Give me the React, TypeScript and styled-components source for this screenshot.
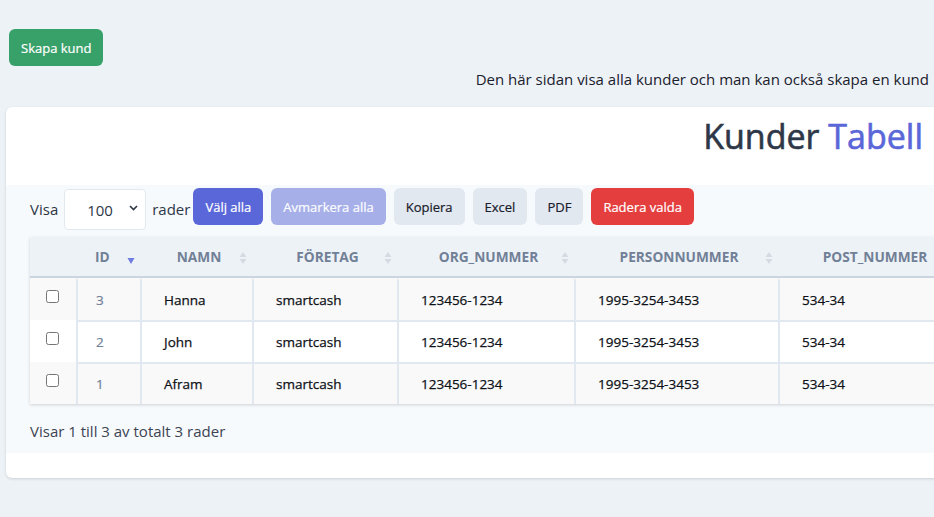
import React from "react";
import styled, { createGlobalStyle } from "styled-components";

const GlobalStyle = createGlobalStyle`
  html, body {
    margin: 0;
    padding: 0;
    background: #edf2f7;
    overflow: hidden;
  }
  body {
    font-family: "Open Sans", "Noto Sans", Arial, sans-serif;
    color: #1a202c;
  }
  * { box-sizing: border-box; }
`;

const Page = styled.div`
  width: 934px;
  padding: 29px 5px 40px 9px;
`;

const CreateButton = styled.button`
  display: block;
  height: 37px;
  padding: 0 12px;
  border: none;
  border-radius: 6px;
  background: #38a169;
  color: #fff;
  font-family: inherit;
  font-size: 13px;
  -webkit-text-stroke: 0.2px #fff;
`;

const Description = styled.p`
  margin: 1px 0 0;
  text-align: right;
  font-size: 15px;
  line-height: 24px;
  color: #1a202c;
`;

const Card = styled.section`
  margin: 16px 0 0 -3px;
  width: 1000px;
  background: #fff;
  border-radius: 6px;
  box-shadow: 0 1px 3px rgba(0, 0, 0, 0.14);
  padding-bottom: 25px;
`;

const Heading = styled.h1`
  width: 917px;
  margin: 0 0 28px;
  padding-top: 8px;
  text-align: right;
  font-size: 34px;
  line-height: 42px;
  font-weight: 400;
  color: #2d3748;
  -webkit-text-stroke: 0.6px #2d3748;
`;

const Accent = styled.span`
  color: #5a67d8;
  -webkit-text-stroke: 0.6px #5a67d8;
`;

const Section = styled.div`
  background: #f7fafc;
  padding: 3px 0 11px 24px;
`;

const Toolbar = styled.div`
  display: flex;
  align-items: flex-start;
  height: 42px;
`;

const Label = styled.span`
  font-size: 15px;
  line-height: 20px;
  color: #2d3748;
  margin-top: 11px;
`;

const SelectWrap = styled.div`
  position: relative;
  margin: 1px 6px 0 6px;
`;

const Select = styled.select`
  appearance: none;
  width: 82px;
  height: 41px;
  padding: 0 0 0 22px;
  border: 1px solid #e2e8f0;
  border-radius: 4px;
  background: #fff;
  font-family: inherit;
  font-size: 15px;
  color: #2d3748;
`;

const Chevron = styled.svg`
  position: absolute;
  right: 8px;
  top: 16px;
  pointer-events: none;
`;

const Buttons = styled.div`
  display: flex;
  gap: 8px;
  margin-left: 3px;
`;

const variants = {
  primary: { bg: "#5a67d8", fg: "#fff" },
  muted: { bg: "#5a67d8", fg: "#fff" },
  light: { bg: "#e2e8f0", fg: "#1a202c" },
  danger: { bg: "#e53e3e", fg: "#fff" },
};

type Variant = keyof typeof variants;

const ToolButton = styled.button<{ $variant: Variant }>`
  height: 37px;
  padding: 0 12px;
  border: none;
  border-radius: 6px;
  font-family: inherit;
  font-size: 13px;
  background: ${(p) => variants[p.$variant].bg};
  color: ${(p) => variants[p.$variant].fg};
  -webkit-text-stroke: 0.2px ${(p) => variants[p.$variant].fg};
  opacity: ${(p) => (p.$variant === "muted" ? 0.5 : 1)};
`;

const TableWrap = styled.div`
  margin-top: 7px;
  box-shadow: 0 1px 3px rgba(0, 0, 0, 0.16);
  width: fit-content;
`;

const Table = styled.table`
  border-collapse: separate;
  border-spacing: 0;
  table-layout: fixed;
`;

const Th = styled.th<{ $left?: boolean }>`
  position: relative;
  height: 41px;
  padding: ${(p) => (p.$left ? "0 0 0 19px" : "0 14px 0 20px")};
  background: #edf2f7;
  border-bottom: 2px solid #cbd5e0;
  text-align: ${(p) => (p.$left ? "left" : "center")};
  font-size: 13.7px;
  font-weight: 700;
  color: #718096;
  text-transform: uppercase;
  white-space: nowrap;
`;

const SortIcon = styled.svg`
  position: absolute;
  right: 5px;
  top: 14px;
`;

const Td = styled.td<{ $odd: boolean; $first: boolean; $pad?: number }>`
  height: 42px;
  padding: 0 0 0 ${(p) => p.$pad ?? 22}px;
  background: ${(p) => (p.$odd ? "#f9f9f9" : "#fff")};
  border-top: 2px solid ${(p) => (p.$first ? "transparent" : "#e2e8f0")};
  border-left: 2px solid #e2e8f0;
  font-size: 13.5px;
  font-weight: 400;
  color: #0d1117;
  -webkit-text-stroke: 0.25px #0d1117;
  white-space: nowrap;
`;

const IdText = styled.span`
  color: #718096;
  -webkit-text-stroke: 0.2px #718096;
`;

const CheckCell = styled.td<{ $odd: boolean }>`
  height: 42px;
  padding: 6px 1px 0 0;
  vertical-align: top;
  text-align: center;
  background: ${(p) => (p.$odd ? "#f9f9f9" : "#fff")};
  border-top: 2px solid transparent;
`;

const Checkbox = styled.input`
  margin: 0;
  width: 13px;
  height: 13px;
`;

const Footer = styled.div`
  padding-top: 16px;
  font-size: 15px;
  line-height: 22px;
  color: #3c4454;
`;

const columns = [
  { key: "id", label: "ID", width: 64, sort: "desc" as const },
  { key: "namn", label: "Namn", width: 112, sort: "none" as const },
  { key: "foretag", label: "Företag", width: 145, sort: "none" as const },
  { key: "org", label: "org_nummer", width: 177, sort: "none" as const },
  { key: "person", label: "Personnummer", width: 204, sort: "none" as const },
  { key: "post", label: "post_nummer", width: 188, sort: "none" as const },
];

const rows = [
  { id: 3, namn: "Hanna", foretag: "smartcash", org: "123456-1234", person: "1995-3254-3453", post: "534-34" },
  { id: 2, namn: "John", foretag: "smartcash", org: "123456-1234", person: "1995-3254-3453", post: "534-34" },
  { id: 1, namn: "Afram", foretag: "smartcash", org: "123456-1234", person: "1995-3254-3453", post: "534-34" },
];

function Sort({ mode }: { mode: "desc" | "none" }) {
  if (mode === "desc") {
    return (
      <SortIcon width="8" height="14" viewBox="0 0 8 14">
        <path d="M0.5 7 L7.5 7 L4 13 Z" fill="#6f7be0" />
      </SortIcon>
    );
  }
  return (
    <SortIcon width="8" height="14" viewBox="0 0 8 14">
      <path d="M0.5 6 L7.5 6 L4 1 Z" fill="#d5dae2" />
      <path d="M0.5 8 L7.5 8 L4 13 Z" fill="#d5dae2" />
    </SortIcon>
  );
}

export default function App() {
  return (
    <>
      <GlobalStyle />
      <Page>
        <CreateButton>Skapa kund</CreateButton>
        <Description>Den här sidan visa alla kunder och man kan också skapa en kund</Description>
        <Card>
          <Heading>
            Kunder <Accent>Tabell</Accent>
          </Heading>
          <Section>
            <Toolbar>
              <Label>Visa</Label>
              <SelectWrap>
                <Select defaultValue="100">
                  <option value="10">10</option>
                  <option value="25">25</option>
                  <option value="50">50</option>
                  <option value="100">100</option>
                </Select>
                <Chevron width="9" height="6" viewBox="0 0 9 6">
                  <path d="M1 1 L4.5 4.5 L8 1" fill="none" stroke="#2d3748" strokeWidth="1.6" />
                </Chevron>
              </SelectWrap>
              <Label>rader</Label>
              <Buttons>
                <ToolButton $variant="primary">Välj alla</ToolButton>
                <ToolButton $variant="muted">Avmarkera alla</ToolButton>
                <ToolButton $variant="light">Kopiera</ToolButton>
                <ToolButton $variant="light">Excel</ToolButton>
                <ToolButton $variant="light">PDF</ToolButton>
                <ToolButton $variant="danger">Radera valda</ToolButton>
              </Buttons>
            </Toolbar>
            <TableWrap>
              <Table>
                <colgroup>
                  <col style={{ width: 46 }} />
                  {columns.map((c) => (
                    <col key={c.key} style={{ width: c.width }} />
                  ))}
                </colgroup>
                <thead>
                  <tr>
                    <Th />
                    {columns.map((c) => (
                      <Th key={c.key} $left={c.key === "id"}>
                        {c.label}
                        {c.key !== "post" && <Sort mode={c.sort} />}
                      </Th>
                    ))}
                  </tr>
                </thead>
                <tbody>
                  {rows.map((r, i) => {
                    const odd = i % 2 === 0;
                    const first = i === 0;
                    return (
                      <tr key={r.id}>
                        <CheckCell $odd={odd}>
                          <Checkbox type="checkbox" />
                        </CheckCell>
                        <Td $odd={odd} $first={first} $pad={18}>
                          <IdText>{r.id}</IdText>
                        </Td>
                        <Td $odd={odd} $first={first}>{r.namn}</Td>
                        <Td $odd={odd} $first={first}>{r.foretag}</Td>
                        <Td $odd={odd} $first={first}>{r.org}</Td>
                        <Td $odd={odd} $first={first}>{r.person}</Td>
                        <Td $odd={odd} $first={first}>{r.post}</Td>
                      </tr>
                    );
                  })}
                </tbody>
              </Table>
            </TableWrap>
            <Footer>Visar 1 till 3 av totalt 3 rader</Footer>
          </Section>
        </Card>
      </Page>
    </>
  );
}
